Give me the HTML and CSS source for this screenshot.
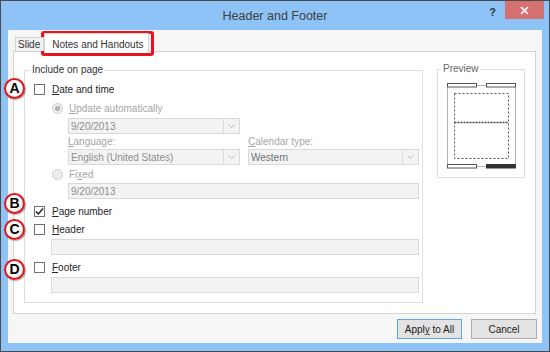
FILE: index.html
```html
<!DOCTYPE html>
<html>
<head>
<meta charset="utf-8">
<title>Header and Footer</title>
<link rel="stylesheet" href="styles.css">
</head>
<body>
<div class="window">
  <div class="titlebar">
    <div></div>
    <div class="title">Header and Footer</div>
    <div class="controls">
      <span class="help">?</span>
      <span class="close"><svg width="9" height="9" viewBox="0 0 9 9"><path d="M1 1 L8 8 M8 1 L1 8" stroke="#fff" stroke-width="1.6"/></svg></span>
    </div>
  </div>
  <div class="client">
    <div class="tabs">
      <div class="tab">Slide</div>
      <div class="tab active">Notes and Handouts</div>
    </div>
    <div class="panel">
      <fieldset class="group include">
        <legend>Include on page</legend>
        <div class="rows">
          <div class="row r-date"><span class="cb"></span><span><u>D</u>ate and time</span></div>
          <div class="row r-radio ind1 dis"><span class="radio"><span class="dot"></span></span><span><u>U</u>pdate automatically</span></div>
          <div class="field select ind2 w-half mt1"><span class="val">9/20/2013</span><span class="arrow"><svg width="7" height="4" viewBox="0 0 7 4"><path d="M0.5 0.5 L3.5 3.5 L6.5 0.5" fill="none" stroke="#b8b8b8"/></svg></span></div>
          <div class="combos ind2">
            <div class="combo left">
              <div class="clabel dis"><u>L</u>anguage:</div>
              <div class="field select"><span class="val">English (United States)</span><span class="arrow"><svg width="7" height="4" viewBox="0 0 7 4"><path d="M0.5 0.5 L3.5 3.5 L6.5 0.5" fill="none" stroke="#b8b8b8"/></svg></span></div>
            </div>
            <div class="combo right">
              <div class="clabel dis"><u>C</u>alendar type:</div>
              <div class="field select dark"><span class="val">Western</span><span class="arrow"><svg width="7" height="4" viewBox="0 0 7 4"><path d="M0.5 0.5 L3.5 3.5 L6.5 0.5" fill="none" stroke="#b8b8b8"/></svg></span></div>
            </div>
          </div>
          <div class="row r-radio ind1 dis"><span class="radio"></span><span>Fi<u>x</u>ed</span></div>
          <div class="field ind2 w-full"><span>9/20/2013</span></div>
          <div class="row r-page"><span class="cb"><svg width="9" height="9" viewBox="0 0 9 9"><path d="M1 4.5 L3.4 7 L8 1.5" fill="none" stroke="#222" stroke-width="1.5"/></svg></span><span><u>P</u>age number</span></div>
          <div class="row r-head"><span class="cb"></span><span><u>H</u>eader</span></div>
          <div class="field ind3 w-text mt1"></div>
          <div class="row r-foot"><span class="cb"></span><span><u>F</u>ooter</span></div>
          <div class="field ind3 w-text mt1"></div>
        </div>
      </fieldset>
      <fieldset class="group preview">
        <legend>Preview</legend>
        <svg class="page" width="70" height="86" viewBox="0 0 70 86">
          <path d="M0.5 3 V83 M68.5 3 V83" stroke="#b4b4b4" fill="none"/>
          <path d="M29 2.5 H40 M29 83.5 H40" stroke="#b4b4b4" fill="none"/>
          <rect x="0.5" y="0.5" width="29" height="3.5" fill="#fff" stroke="#555"/>
          <rect x="39.5" y="0.5" width="29" height="3.5" fill="#fff" stroke="#555"/>
          <rect x="0.5" y="81.5" width="29" height="3.5" fill="#fff" stroke="#555"/>
          <rect x="39.5" y="81.5" width="29" height="3.5" fill="#333" stroke="#333"/>
          <rect x="7.5" y="10.5" width="54" height="65" fill="none" stroke="#555" stroke-dasharray="2 2"/>
          <line x1="7.5" y1="39.5" x2="61.5" y2="39.5" stroke="#444" stroke-width="1.3" stroke-dasharray="2 1"/>
        </svg>
      </fieldset>
    </div>
    <div class="buttons">
      <div class="btn default"><span>Appl<u>y</u> to All</span></div>
      <div class="btn cancel"><span>Cancel</span></div>
    </div>
  </div>
  <div class="highlight"></div>
  <div class="mark m-a">A</div>
  <div class="mark m-b">B</div>
  <div class="mark m-c">C</div>
  <div class="mark m-d">D</div>
</div>
</body>
</html>
```
FILE: styles.css
```css
html, body {
  margin: 0;
  padding: 0;
  background: #fff;
}
body {
  font-family: "Liberation Sans", Arial, sans-serif;
  font-size: 10px;
  color: #262626;
}
u { text-decoration: underline; text-underline-offset: 1px; }

.window {
  position: relative;
  width: 550px;
  height: 352px;
  box-sizing: border-box;
  border: 1px solid #4b4b4b;
  background: #8dc3f6;
  padding: 0 7px 8px;
  display: flex;
  flex-direction: column;
}

.titlebar {
  height: 29px;
  margin: 0 -7px;
  display: grid;
  grid-template-columns: 1fr auto 1fr;
}
.title {
  font-size: 12.5px;
  color: #404040;
  line-height: 30px;
}
.controls {
  justify-self: end;
  display: flex;
  align-items: flex-start;
}
.help {
  font-weight: bold;
  font-size: 11px;
  line-height: 12px;
  color: #333;
  margin-top: 5px;
  margin-right: 9px;
}
.close {
  width: 39px;
  height: 18px;
  background: #d4706f;
  margin-right: 5px;
  display: flex;
  align-items: center;
  justify-content: center;
}

.client {
  flex: 1;
  background: #f6f6f6;
  padding: 3px 6px 0 5px;
  display: flex;
  flex-direction: column;
}

.tabs {
  display: flex;
  align-items: flex-end;
  height: 18px;
  margin-left: 2px;
  position: relative;
  z-index: 1;
}
.tab {
  height: 14px;
  box-sizing: border-box;
  border: 1px solid #d3d3d3;
  border-bottom: none;
  background: #f2f2f2;
  padding: 1px 3px 0 2px;
  line-height: 12px;
  color: #333;
}
.tab.active {
  height: 19px;
  margin-bottom: -1px;
  background: #fff;
  padding: 4px 5px 0 7px;
  line-height: 13px;
}

.panel {
  height: 263px;
  box-sizing: border-box;
  border: 1px solid #d3d3d3;
  background: #fff;
  display: flex;
  align-items: flex-start;
  gap: 14px;
  padding: 12px 10px 0 10px;
}

.group {
  margin: 0;
  padding: 0;
  border: 1px solid #dedede;
  box-sizing: border-box;
  min-width: 0;
}
.group legend {
  padding: 0 2px;
  margin-left: 5px;
  line-height: 12px;
  color: #333;
}
.include {
  width: 399px;
  height: 239px;
}
.preview {
  width: 88px;
  height: 115px;
  margin-top: -1px;
}
.preview legend {
  margin-left: 3px;
  color: #666;
}
.page {
  display: block;
  margin: 8px 0 0 9px;
}

.rows {
  padding: 3px 0 0 9px;
  display: flex;
  flex-direction: column;
  align-items: flex-start;
}
.row {
  display: flex;
  align-items: center;
}
.r-date { height: 20px; }
.r-radio { height: 18px; }
.r-page { height: 17px; margin-top: 4px; }
.r-head { height: 18px; }
.r-foot { height: 18px; margin-top: 3px; }

.ind1 { margin-left: 18px; }
.ind2 { margin-left: 34px; }
.ind3 { margin-left: 17px; }
.mt1 { margin-top: 1px; }

.dis { color: #a6a6a6; }

.cb {
  width: 11px;
  height: 11px;
  box-sizing: border-box;
  border: 1px solid #707070;
  background: #fff;
  margin-right: 7px;
  display: flex;
  align-items: center;
  justify-content: center;
}
.radio {
  width: 11px;
  height: 11px;
  box-sizing: border-box;
  border-radius: 50%;
  border: 1px solid #d0d0d0;
  background: #ededed;
  margin-right: 6px;
  display: flex;
  align-items: center;
  justify-content: center;
}
.dot {
  width: 5px;
  height: 5px;
  border-radius: 50%;
  background: #b0b0b0;
}

.field {
  height: 16px;
  box-sizing: border-box;
  border: 1px solid #d9d9d9;
  background: #f3f3f3;
  color: #8e8e8e;
  display: flex;
  align-items: center;
  padding-left: 2px;
}
.select .val { flex: 1; white-space: nowrap; overflow: hidden; }
.select .arrow {
  width: 15px;
  height: 100%;
  border-left: 1px solid #dcdcdc;
  display: flex;
  align-items: center;
  justify-content: center;
}
.field.dark { color: #707070; }
.w-half { width: 172px; }
.w-full { width: 351px; }
.w-text { width: 368px; }

.combos {
  display: flex;
  gap: 8px;
}
.combo.left { width: 172px; }
.combo.right { width: 171px; }
.clabel {
  height: 15px;
  line-height: 15px;
}

.buttons {
  display: flex;
  justify-content: flex-end;
  gap: 9px;
  margin-top: 5px;
  margin-right: -1px;
}
.btn {
  width: 65px;
  height: 20px;
  box-sizing: border-box;
  border: 1px solid #adadad;
  background: #e3e3e3;
  display: flex;
  align-items: center;
  justify-content: center;
  color: #222;
}
.btn.default { border-color: #5ea6e6; }
.btn.cancel { width: 66px; }

.highlight {
  position: absolute;
  left: 40px;
  top: 30px;
  width: 113px;
  height: 25px;
  box-sizing: border-box;
  border: 3px solid #e8141b;
  border-radius: 3px;
}

.mark {
  position: absolute;
  left: 3px;
  width: 21px;
  height: 21px;
  box-sizing: border-box;
  border: 2px solid #e3151c;
  border-radius: 50%;
  background: radial-gradient(circle at 40% 35%, #fff 45%, #d8d8d8 100%);
  box-shadow: 1px 1px 1px rgba(0, 0, 0, 0.35);
  font-family: "Liberation Sans", Arial, sans-serif;
  font-weight: bold;
  font-size: 14px;
  line-height: 17px;
  text-align: center;
  color: #000;
}
.m-a { top: 77px; }
.m-b { top: 192px; }
.m-c { top: 218px; }
.m-d { top: 258px; }
```
